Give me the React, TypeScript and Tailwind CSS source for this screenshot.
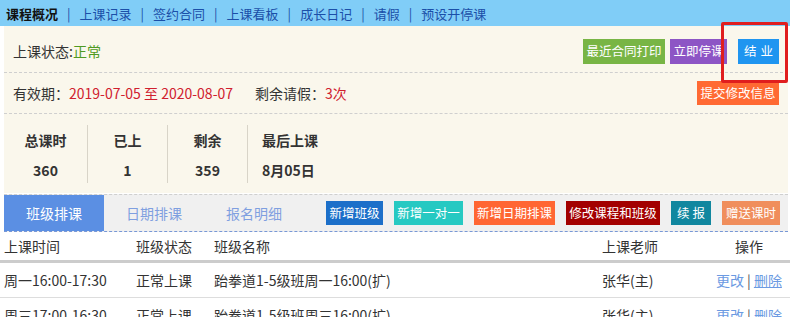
import React from 'react';

const navItems = ['上课记录', '签约合同', '上课看板', '成长日记', '请假', '预设开停课'];

const stats = [
  { label: '总课时', value: '360', w: 'w-[84px]' },
  { label: '已上', value: '1', w: 'w-[80px]' },
  { label: '剩余', value: '359', w: 'w-[80px]' },
];

const actionButtons = [
  { name: '新增班级', cls: 'bg-[#1c6fc9] w-[57px]' },
  { name: '新增一对一', cls: 'bg-[#26c9c2] w-[69px]' },
  { name: '新增日期排课', cls: 'bg-[#ff6633] w-[81px]' },
  { name: '修改课程和班级', cls: 'bg-[#a30000] w-[94px]' },
  { name: '续 报', cls: 'bg-[#11879f] w-[40px]' },
  { name: '赠送课时', cls: 'bg-[#f08e5c] w-[58px]' },
];

const rows = [
  { time: '周一16:00-17:30', status: '正常上课', name: '跆拳道1-5级班周一16:00(扩)', teacher: '张华(主)' },
  { time: '周三17:00-16:30', status: '正常上课', name: '跆拳道1-5级班周三16:00(扩)', teacher: '张华(主)' },
];

const App = () => {
  return (
    <div className="relative w-[790px] h-[317px] overflow-hidden bg-white text-[#333] font-['Noto_Sans_CJK_SC','Microsoft_YaHei',sans-serif]">
      {/* top nav */}
      <div className="h-[26px] bg-[#80cdf7] flex items-center pl-[6px] text-[13px] leading-none">
        <span className="font-bold text-[#111]">课程概况</span>
        {navItems.map((item) => (
          <React.Fragment key={item}>
            <span className="mx-[9px] text-[#1b4fa8]">|</span>
            <span className="text-[#1b4fa8]">{item}</span>
          </React.Fragment>
        ))}
      </div>

      <div className="pl-[4px] pr-[2px]">
        {/* info panel */}
        <div className="bg-[#faf7ec] text-[14px] leading-none">
          <div className="h-[47px] flex items-center justify-between pl-[9px] pr-[9px] pt-[4px] border-b border-dashed border-[#cfcfcf]">
            <div>
              上课状态:<span className="text-[#4f9a23]">正常</span>
            </div>
            <div className="flex items-center gap-[5px] text-[12.5px] text-white">
              <span className="h-[25px] w-[82px] flex items-center justify-center bg-[#78b545]">最近合同打印</span>
              <span className="h-[25px] w-[57px] flex items-center justify-center bg-[#8d55c5] mr-[6px]">立即停课</span>
              <span className="h-[25px] w-[41px] flex items-center justify-center bg-[#1f95f0] tracking-[4px] pl-[4px]">结业</span>
            </div>
          </div>

          <div className="h-[41px] flex items-center justify-between pl-[9px] pr-[9px] border-b border-dashed border-[#cfcfcf]">
            <div className="flex items-center">
              <span>有效期：</span>
              <span className="text-[#d0202e]">2019-07-05 至 2020-08-07</span>
              <span className="ml-[22px]">剩余请假：</span>
              <span className="text-[#d0202e]">3次</span>
            </div>
            <span className="h-[24px] w-[82px] flex items-center justify-center bg-[#ff6a33] text-white text-[12.5px]">提交修改信息</span>
          </div>

          <div className="h-[79px] flex items-center font-bold text-[#333]">
            {stats.map((s) => (
              <div key={s.label} className={`${s.w} h-[58px] border-r border-[#d8d4c8] flex flex-col items-center justify-between pt-[8px] pb-[6px]`}>
                <span>{s.label}</span>
                <span>{s.value}</span>
              </div>
            ))}
            <div className="h-[58px] flex flex-col justify-between pt-[8px] pb-[6px] pl-[14px]">
              <span>最后上课</span>
              <span>8月05日</span>
            </div>
          </div>
        </div>

        {/* tabs */}
        <div className="mt-[1px] h-[38px] bg-[#f0f0f0] border-t border-dashed border-[#cfcfcf] border-b border-b-[#7898d6] flex items-center text-[14px] leading-none">
          <div className="w-[100px] h-full bg-[#5b8fe3] text-white flex items-center justify-center">班级排课</div>
          <div className="w-[100px] h-full text-[#7f9fe0] flex items-center justify-center">日期排课</div>
          <div className="w-[100px] h-full text-[#7f9fe0] flex items-center justify-center">报名明细</div>
          <div className="flex items-center gap-[11px] ml-[22px] text-[12.5px] text-white">
            {actionButtons.map((b) => (
              <span key={b.name} className={`h-[24px] flex items-center justify-center ${b.cls}`}>
                {b.name}
              </span>
            ))}
          </div>
        </div>
      </div>

      {/* table */}
      <div className="text-[14px] leading-none">
        <div className="h-[31px] flex items-center pl-[4px] border-b-[3px] border-[#cccccc]">
          <span className="w-[132px]">上课时间</span>
          <span className="w-[78px]">班级状态</span>
          <span className="w-[388px]">班级名称</span>
          <span className="w-[110px]">上课老师</span>
          <span className="w-[74px] text-center">操作</span>
        </div>
        {rows.map((r) => (
          <div key={r.time} className="h-[35px] flex items-center pl-[4px] border-b border-[#dddddd]">
            <span className="w-[132px]">{r.time}</span>
            <span className="w-[78px]">{r.status}</span>
            <span className="w-[388px]">{r.name}</span>
            <span className="w-[110px]">{r.teacher}</span>
            <span className="w-[74px] text-center">
              <span className="text-[#6b9ae2]">更改</span>
              <span className="text-[#555] mx-[3px]">|</span>
              <span className="text-[#6b9ae2] underline">删除</span>
            </span>
          </div>
        ))}
      </div>

      {/* annotation box */}
      <div className="absolute left-[721px] top-[22px] w-[67px] h-[61px] border-[3px] border-[#e01e1e] rounded-[2px]" />
    </div>
  );
};

export default App;
